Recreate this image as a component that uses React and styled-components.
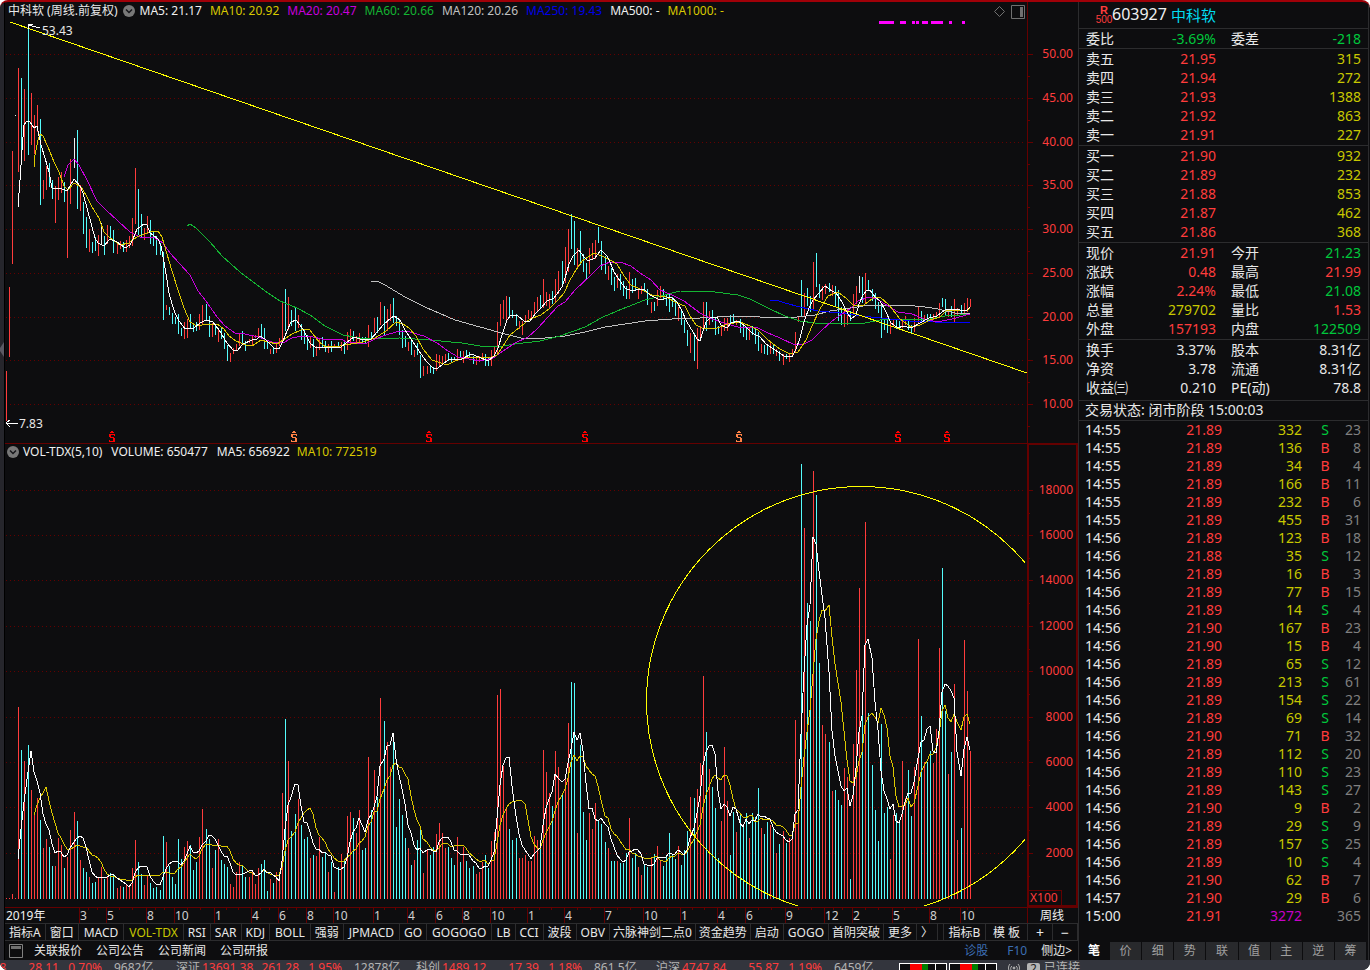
import React from 'react'
import styled, { createGlobalStyle, css } from 'styled-components'

const UP = '#ff3c3c'
const DOWN = '#54fcfc'
const GREEN = '#00c83c'
const YELLOW = '#c8c800'
const LABEL = '#e8e8e8'
const GRID = '#640000'
const FONT = '"Noto Sans", "Noto Sans CJK SC", sans-serif'

// weekly bars: tone (r up, c down, w flat), high row, low row, volume height
const BARS = `
r371,421,1 r287,357,1 r151,264,5 w115,116,1 r68,172,192 c78,150,149 r89,161,138 c25,155,154 r93,145,109 r115,154,86
r105,132,101 c119,205,79 r180,199,51 r166,190,60 c163,187,52 c180,199,33 r186,223,33 r177,200,61 r172,193,54 c182,202,31
r191,258,42 r159,204,69 w138,168,87 c130,209,78 r185,211,39 c202,234,31 c217,248,27 r229,252,22 c242,253,16 c237,251,17
r235,256,21 w223,245,32 c236,255,20 r225,244,22 c226,240,26 c230,253,24 r243,254,11 r241,249,13 c242,252,12 r240,252,14
r236,248,12 r218,246,31 r168,224,59 c189,235,37 c214,237,25 r228,240,14 r216,234,24 c220,244,16 c232,246,11 c236,255,12
c243,255,9 c252,320,63 r305,310,57 c307,315,33 c313,324,22 c317,324,15 c314,334,60 c328,336,40 r322,339,52 r319,338,58
c314,328,54 c323,332,29 c322,331,37 r314,330,62 r305,324,90 c304,320,70 c316,337,60 r323,337,31 c325,335,49 r329,342,60
c328,339,39 c333,349,35 c345,361,32 r353,362,15 r348,354,12 r344,351,27 r334,346,37 c331,343,34 c341,351,22 r339,343,22
r335,345,28 r335,338,15 r328,338,31 c324,338,35 c328,349,39 c341,349,8 r349,354,20 c348,354,16 r343,353,27 r338,346,19
r301,342,106 c289,331,180 r297,330,138 c310,326,68 c308,331,85 r315,328,100 c324,340,74 c330,344,60 c335,350,62 r337,348,41
c339,357,44 r346,356,43 r338,350,62 c337,348,42 c341,352,46 r344,353,27 c341,352,37 r344,348,7 c342,348,32 r342,351,45
c342,354,38 r332,350,83 r329,345,87 c331,341,81 r336,343,66 r333,343,89 c337,344,49 c337,344,51 r325,347,142 c332,338,89
r318,333,129 c317,333,102 r302,325,201 c306,335,178 r309,331,157 r304,321,132 c298,323,160 c316,326,72 c320,335,100 c330,348,84
c336,347,61 r342,351,51 c341,355,34 r350,357,39 c343,355,59 c355,378,71 r366,376,26 r366,374,49 c365,373,44 c367,374,52
r354,371,65 r355,367,76 r356,365,66 r354,363,51 c353,361,52 c357,362,41 c357,360,34 r349,359,62 c351,357,37 r351,363,52
c350,356,38 c352,358,31 c356,364,33 r358,365,25 r356,362,27 r353,361,37 c354,366,44 c358,366,31 r350,366,58 r346,357,67
r322,353,204 r304,326,210 r300,319,133 r296,320,92 c297,318,70 c310,318,59 c314,326,61 r321,329,41 r321,335,41 r315,322,44
r310,319,38 r311,318,38 r302,314,63 r297,311,59 c295,308,59 r279,308,149 r292,306,127 r294,308,106 c291,304,93 r279,303,148
r271,294,132 c261,284,105 r247,283,120 r229,272,176 c214,249,217 c221,265,216 r248,268,66 c231,265,154 c254,272,87 c263,280,59
r248,274,86 r243,260,70 r240,259,96 c227,243,79 c241,270,75 c256,274,57 r266,280,51 c268,285,38 c277,291,38 r274,288,38
c274,290,36 c281,296,36 c286,299,46 r272,299,81 c279,293,41 c278,291,46 r288,299,32 r286,294,24 c283,291,34 c289,305,32
r302,313,42 c302,311,45 r290,306,53 r286,298,38 c289,299,33 c295,306,42 c294,312,66 c297,307,44 c301,316,40 r307,321,53
c311,325,34 c320,333,49 c330,346,68 r333,353,102 c333,361,101 r328,369,110 r326,341,136 r302,330,223 c302,331,167 r311,325,130
c310,322,112 c318,335,91 c326,334,41 r325,336,78 r318,331,152 r318,331,98 c315,325,44 c314,324,87 r320,325,67 c319,333,86
c325,337,74 c327,340,86 r328,340,61 c326,335,86 c327,344,82 c332,351,111 r344,353,71 c345,354,65 c345,355,77 r343,354,74
c345,354,71 r349,356,46 c351,361,55 r354,365,68 c354,359,56 r353,362,61 r349,357,62 r332,353,179 r316,322,89 c280,316,435
r293,317,371 c288,306,296 c296,312,278 r262,309,428 c253,287,404 c284,298,236 r286,300,174 r284,294,165 c283,292,157 r285,296,108
c286,307,109 c290,321,99 c307,325,94 r306,327,131 r308,325,122 c311,321,20 r294,315,155 r286,304,229 w276,293,311 c277,303,198
r273,303,377 c280,291,186 c289,301,134 c293,309,89 c302,313,58 c303,338,175 c320,330,86 c320,333,92 r322,334,40 r320,327,84
c319,329,86 c321,330,78 r320,328,138 r316,325,101 c320,330,129 c325,334,83 r318,332,132 r306,323,260 c311,321,183 r315,321,137
c314,321,137 c314,319,148 r314,320,136 r312,318,170 r303,317,251 c298,307,331 c299,316,188 r309,317,125 c306,317,147 r299,322,215
r308,315,59 c305,315,71 r303,314,259 r298,312,208 r299,307,148
`.trim().split(/\s+/).map((s, i) => {
    const [high, low, volume] = s.slice(1).split(',').map(Number)
    return { x: Math.floor(6.55 + 3.069 * i), tone: s[0], high, low, volume }
})

const BAR_COLOR = { r: UP, c: DOWN, w: '#f0f0f0' }
const VOLUME_BASE = 899

const AVERAGES = [
    { color: '#c0c0c0', points: '371,281 377,281 385,285 405,297 425,307 455,320 480,327 505,334 525,339 545,338 565,336 585,332 605,327 645,321 672,319 700,318 735,316 755,316 760,317 797,317 815,315 830,311 850,308 870,305 905,305 925,307 938,309 955,313 970,314' },
    { color: '#14b432', points: '187,226 190,224 196,228 210,242 222,256 240,272 257,285 268,293 280,301 297,308 310,315 325,326 343,335 365,339 400,338 430,340 462,343 480,346 497,347 515,344 540,341 560,336 585,327 603,317 622,309 645,300 661,296 680,291 715,292 738,295 750,299 770,309 785,316 800,321 815,323 838,323 850,324 865,323 880,320 905,319 925,320 945,316 960,315 970,314' },
    { color: '#0000ff', points: '770,300 776,300 785,303 800,307 818,311 840,313 862,316 890,319 910,321 935,322 970,322' },
    { color: '#c800dc', points: '64,177 68,165 74,159 79,165 87,180 97,201 106,210 118,221 130,232 140,237 155,238 163,243 170,253 180,264 190,275 198,291 206,301 217,317 225,326 235,333 245,334 258,337 272,342 283,343 292,338 302,336 313,337 322,339 342,339 346,342 365,344 375,339 386,335 396,332 406,331 424,336 437,343 448,351 458,357 480,361 493,358 503,351 515,343 528,337 537,329 548,317 558,306 565,302 575,290 590,276 600,266 610,262 620,262 631,266 640,273 651,280 660,290 672,295 684,301 700,313 712,319 727,324 738,327 756,327 768,333 780,338 795,345 804,344 812,340 822,330 832,321 842,314 850,309 858,301 869,297 877,299 888,306 898,312 912,314 924,319 937,322 952,319 970,314' },
    { color: '#dcc800', points: '34,167 35,155 38,140 40,134 43,136 48,147 54,162 59,172 64,186 68,190 74,183 81,187 86,195 92,207 99,218 104,232 110,238 120,245 129,243 137,237 144,234 153,231 158,231 162,237 167,254 172,271 178,290 184,308 190,322 197,326 208,324 217,324 224,329 229,336 236,341 246,345 252,346 261,340 268,342 277,344 283,340 292,334 301,330 309,329 313,334 319,342 326,347 340,346 351,344 363,342 375,338 386,331 396,322 403,324 409,328 416,336 423,349 432,360 447,365 455,361 468,357 490,358 497,355 503,346 510,335 520,327 530,319 541,315 550,308 558,300 564,293 570,280 576,270 582,261 588,257 594,253 602,256 610,260 617,264 624,276 631,285 640,289 652,295 666,297 677,303 685,306 690,316 696,325 704,329 717,328 728,324 740,322 750,326 758,330 768,340 780,349 790,354 798,352 806,340 812,326 820,309 828,296 838,292 846,298 853,305 864,305 873,298 880,297 889,305 900,319 911,327 920,325 930,320 940,317 947,310 957,311 968,310 970,307' },
    { color: '#ffffff', points: '18,207 20,180 22,150 24,125 27,121 30,122 34,128 37,126 41,145 45,158 49,172 52,188 60,188 67,191 74,179 80,186 83,193 88,212 91,223 95,238 98,243 104,246 110,239 117,242 125,248 130,245 133,239 137,229 144,224 147,225 150,233 158,239 161,246 164,262 167,280 169,293 172,304 175,313 179,321 185,329 194,328 200,323 206,320 213,322 219,330 227,343 233,350 237,351 243,344 252,340 257,339 260,336 265,339 274,348 279,349 283,341 287,331 291,322 296,320 303,329 310,343 316,348 326,347 341,347 346,343 354,337 363,340 371,339 378,331 383,325 391,318 394,316 400,320 405,330 413,342 419,351 426,361 434,369 438,368 448,360 462,359 471,354 479,357 488,361 494,356 498,348 503,332 507,320 511,315 518,316 524,321 530,321 536,313 541,308 547,301 554,298 562,287 565,278 569,264 573,256 579,250 584,257 588,261 595,258 601,250 607,256 610,262 614,272 618,278 625,288 632,291 640,289 644,289 650,295 660,300 671,297 677,302 682,311 687,322 693,332 697,339 700,341 702,334 706,322 711,317 717,317 721,325 727,328 731,323 738,321 745,326 752,333 760,337 766,344 775,350 784,356 792,357 796,349 800,338 804,322 809,308 813,300 818,294 825,286 832,291 836,293 842,302 846,310 851,319 856,315 859,304 863,295 867,290 870,290 875,297 880,301 885,310 891,323 898,328 903,326 911,328 920,323 929,318 937,316 945,310 952,309 960,310 966,311 970,307' },
]

const PRICE_TICKS = [['50.00', 54], ['45.00', 98], ['40.00', 142], ['35.00', 185], ['30.00', 229], ['25.00', 273], ['20.00', 317], ['15.00', 360], ['10.00', 404]]
const VOLUME_TICKS = [['18000', 490], ['16000', 535], ['14000', 580], ['12000', 626], ['10000', 671], ['8000', 717], ['6000', 762], ['4000', 807], ['2000', 853]]
const MONTHS = [['3', 80], ['5', 107], ['8', 147], ['10', 175], ['1', 215], ['4', 252], ['6', 279], ['8', 307], ['10', 334], ['1', 374], ['4', 408], ['6', 436], ['8', 463], ['10', 491], ['1', 528], ['4', 565], ['7', 605], ['10', 644], ['1', 681], ['4', 718], ['6', 746], ['9', 786], ['12', 825], ['2', 853], ['5', 893], ['8', 930], ['10', 961]]
const DIVIDENDS = [[112], [294, true], [429], [585], [739, true], [898], [947]]
const SIGNALS = [[879, 15], [900, 6], [912, 3], [916, 3], [922, 6], [931, 12], [949, 3], [962, 3]]

const PRICE_LEGEND = [
    ['MA5: 21.17', '#f0f0f0'], ['MA10: 20.92', '#d8c800'], ['MA20: 20.47', '#c800dc'], ['MA60: 20.66', '#14b432'],
    ['MA120: 20.26', '#c0c0c0'], ['MA250: 19.43', '#0000e6'], ['MA500: -', '#f0f0f0'], ['MA1000: -', '#d8c800'],
]

const INDICATORS = ['指标A', '窗口', 'MACD', 'VOL-TDX', 'RSI', 'SAR', 'KDJ', 'BOLL', '强弱', 'JPMACD', 'GO', 'GOGOGO', 'LB', 'CCI', '波段', 'OBV', '六脉神剑二点0', '资金趋势', '启动', 'GOGO', '首阴突破', '更多', '〉']

const QUOTES = [
    [['委比', '-3.69%', GREEN, '委差', '-218', GREEN]],
    [
        ['卖五', '21.95', UP, '', '315', YELLOW], ['卖四', '21.94', UP, '', '272', YELLOW], ['卖三', '21.93', UP, '', '1388', YELLOW],
        ['卖二', '21.92', UP, '', '863', YELLOW], ['卖一', '21.91', UP, '', '227', YELLOW],
    ],
    [
        ['买一', '21.90', UP, '', '932', YELLOW], ['买二', '21.89', UP, '', '232', YELLOW], ['买三', '21.88', UP, '', '853', YELLOW],
        ['买四', '21.87', UP, '', '462', YELLOW], ['买五', '21.86', UP, '', '368', YELLOW],
    ],
    [
        ['现价', '21.91', UP, '今开', '21.23', GREEN], ['涨跌', '0.48', UP, '最高', '21.99', UP], ['涨幅', '2.24%', UP, '最低', '21.08', GREEN],
        ['总量', '279702', YELLOW, '量比', '1.53', UP], ['外盘', '157193', UP, '内盘', '122509', GREEN],
    ],
    [
        ['换手', '3.37%', LABEL, '股本', '8.31亿', LABEL], ['净资', '3.78', LABEL, '流通', '8.31亿', LABEL],
        ['收益㈢', '0.210', LABEL, 'PE(动)', '78.8', LABEL],
    ],
]

const TRADES = `
14:55 21.89 332 S 23|14:55 21.89 136 B 8|14:55 21.89 34 B 4|14:55 21.89 166 B 11|14:55 21.89 232 B 6|14:55 21.89 455 B 31
14:56 21.89 123 B 18|14:56 21.88 35 S 12|14:56 21.89 16 B 3|14:56 21.89 77 B 15|14:56 21.89 14 S 4|14:56 21.90 167 B 23
14:56 21.90 15 B 4|14:56 21.89 65 S 12|14:56 21.89 213 S 61|14:56 21.89 154 S 22|14:56 21.89 69 S 14|14:56 21.90 71 B 32
14:56 21.89 112 S 20|14:56 21.89 110 S 23|14:56 21.89 143 S 27|14:56 21.90 9 B 2|14:56 21.89 29 S 9|14:56 21.89 157 S 25
14:56 21.89 10 S 4|14:56 21.90 62 B 7|14:57 21.90 29 B 6|15:00 21.91 3272 - 365
`.trim().split(/[|\n]/).map(line => line.split(' '))

const MARKETS = [
    ['上证', '3391.88', '28.11', '0.70%', '9682亿'],
    ['深证', '13691.38', '261.28', '1.95%', '12878亿'],
    ['科创', '1489.12', '17.39', '1.18%', '861.5亿'],
    ['沪深', '4747.84', '55.87', '1.19%', '6459亿'],
]

const movingAverage = (size) => BARS.slice(size - 1).map((bar, i) => {
    const sum = BARS.slice(i, i + size).reduce((total, b) => total + b.volume, 0)
    return `${bar.x},${Math.round(VOLUME_BASE - sum / size)}`
}).join(' ')

const tabPadding = (name) => {
    if (/^[A-Z-]{4,}$/.test(name) && name !== 'GOGO') return 5
    return /[\u4e00-\u9fff]{4,}/.test(name) ? 3 : 4
}

function Scale({ ticks, step }) {
    return (
        <g>
            {ticks.map(([label, y]) => (
                <g key={label}>
                    <line x1="6" x2="1026" y1={y + 0.5} y2={y + 0.5} stroke={GRID} strokeDasharray="1 3" />
                    <line x1="1028" x2="1033" y1={y + 0.5} y2={y + 0.5} stroke={GRID} />
                    <line x1="1028" x2="1030" y1={y + step + 0.5} y2={y + step + 0.5} stroke={GRID} />
                    <text x="1073" y={y + 4} fill={UP} textAnchor="end">{label}</text>
                </g>
            ))}
        </g>
    )
}

function PriceChart() {
    return (
        <Chart viewBox="5 21 1073 422" role="img" aria-label="周线价格">
            <Scale ticks={PRICE_TICKS} step={22} />
            <line x1="1027.5" x2="1027.5" y1="21" y2="443" stroke={GRID} />
            {SIGNALS.map(([x, width]) => <rect key={x} x={x} y="21" width={width} height="3" fill="#ff00ff" />)}
            {BARS.map(bar => <rect key={bar.x} x={bar.x} y={bar.high} width="1" height={bar.low - bar.high} fill={BAR_COLOR[bar.tone]} />)}
            {AVERAGES.map(line => <Curve key={line.color} points={line.points} stroke={line.color} />)}
            <Curve points="10,22 1027,373" stroke="#ffff00" />
            <Curve points="33,24 28,24 28,29" stroke="#fff" />
            <Curve points="28,25 40,28" stroke="#fff" />
            <text x="42" y="35" fill={LABEL}>53.43</text>
            <Curve points="10,420 6,423 10,427" stroke="#fff" />
            <Curve points="6,423 18,423" stroke="#fff" />
            <text x="19" y="428" fill={LABEL}>7.83</text>
            {DIVIDENDS.map(([x, soft]) => (
                <Dividend key={x} $soft={soft}>
                    <path d={`M${x - 1} 431h2v1h1v1h-4v-1h1zM${x - 3} 434h6v2h-1v-1h-3v2h3v1h1v4h-6v-2h1v1h3v-3h-3v-1h-1z`} />
                </Dividend>
            ))}
        </Chart>
    )
}

function VolumeChart() {
    return (
        <Chart viewBox="5 460 1073 447" role="img" aria-label="成交量">
            <clipPath id="plot"><rect x="5" y="460" width="1020" height="446" /></clipPath>
            <Scale ticks={VOLUME_TICKS} step={23} />
            <path d="M1028 460V906H1077V460" fill="none" stroke={GRID} strokeWidth="2" />
            <path d="M1029 890.5H1061.5V906" fill="none" stroke={GRID} />
            <text x="1030" y="902" fill={UP}>X100</text>
            {BARS.map(bar => <rect key={bar.x} x={bar.x} y={VOLUME_BASE - bar.volume} width="1" height={bar.volume} fill={BAR_COLOR[bar.tone === 'w' ? 'r' : bar.tone]} />)}
            <Curve points={movingAverage(10)} stroke="#dcc800" />
            <Curve points={movingAverage(5)} stroke="#ffffff" />
            <circle cx="861" cy="701" r="214.5" fill="none" stroke="#ffff00" clipPath="url(#plot)" />
        </Chart>
    )
}

function TimeAxis() {
    return (
        <Chart viewBox="5 907 1073 16" role="img" aria-label="时间轴">
            <path d="M5 907.5H1078M1027.5 907V923" stroke={GRID} fill="none" />
            {MONTHS.map(([label, x], i) => {
                const next = i < MONTHS.length - 1 ? MONTHS[i + 1][1] : x + 20
                const third = Math.round((next - x) / 3)
                return (
                    <g key={x}>
                        <path d={`M${x - 0.5} 907V923M${x + third - 0.5} 907V910M${x + third * 2 - 0.5} 907V910`} stroke={GRID} />
                        <text x={x} y="920" fill="#d0d0d0">{label}</text>
                    </g>
                )
            })}
            <text x="6" y="920" fill="#f0f0f0">2019年</text>
            <text x="1040" y="920" fill="#f0f0f0">周线</text>
        </Chart>
    )
}

function Chevron() {
    return (
        <ToggleButton aria-label="展开">
            <svg width="12" height="12" viewBox="0 0 12 12">
                <circle cx="6" cy="6" r="6" fill="#787878" />
                <path d="M3 4.5L6 7.5L9 4.5" fill="none" stroke="#16161a" strokeWidth="1.5" />
            </svg>
        </ToggleButton>
    )
}

function QuotePanel() {
    return (
        <Side>
            <Title>
                <Badge><b>R</b><span>500</span></Badge>
                <Code>603927</Code>
                <Name>中科软</Name>
            </Title>
            <QuoteTable>
                <colgroup><col width="57" /><col width="80" /><col width="62" /><col /></colgroup>
                {QUOTES.map(group => (
                    <tbody key={group[0][0]}>
                        {group.map(([label, value, tone, label2, value2, tone2]) => (
                            <tr key={label}>
                                <th scope="row">{label}</th>
                                <Value $tone={tone}>{value}</Value>
                                <th>{label2}</th>
                                <Value $tone={tone2}>{value2}</Value>
                            </tr>
                        ))}
                    </tbody>
                ))}
            </QuoteTable>
            <Status>交易状态: 闭市阶段 15:00:03</Status>
            <TradeTable>
                <colgroup><col width="57" /><col width="86" /><col width="80" /><col width="32" /><col /></colgroup>
                <tbody>
                    {TRADES.map(([time, price, lots, side, count], i) => (
                        <tr key={i}>
                            <th scope="row">{time}</th>
                            <Value $tone={UP}>{price}</Value>
                            <Value $tone={side === '-' ? '#c800c8' : YELLOW}>{lots}</Value>
                            <SideMark $tone={side === 'S' ? GREEN : UP}>{side === '-' ? '' : side}</SideMark>
                            <Value $tone="#808080">{count}</Value>
                        </tr>
                    ))}
                </tbody>
            </TradeTable>
            <SideTabs>
                {['笔', '价', '细', '势', '联', '值', '主', '逆', '筹'].map((tab, i) => (
                    <SideTab key={tab} $active={i === 0}>{tab}</SideTab>
                ))}
            </SideTabs>
        </Side>
    )
}

function Ticker() {
    return (
        <TickerBar>
            {MARKETS.map(([name, value, change, percent, amount]) => (
                <Market key={name}>
                    <span>{name}</span>
                    <Rise>{value}</Rise>
                    <Rise $end>{change}</Rise>
                    <Rise $end>{percent}</Rise>
                    <Amount>{amount}</Amount>
                </Market>
            ))}
            <Meter><i /><i /><i /><i /><i /></Meter>
            <Meter><i /><i /><i /><i /><i /></Meter>
            <Connection>
                <svg width="14" height="10" viewBox="0 0 14 10" fill="none" stroke="#b0b0b0">
                    <path d="M3 1a6 6 0 0 0 0 8M11 1a6 6 0 0 1 0 8M5 3a3 3 0 0 0 0 5M9 3a3 3 0 0 1 0 5" />
                    <circle cx="7" cy="5" r="1" fill="#b0b0b0" />
                </svg>
                <Count>2</Count>
                <span>已连接</span>
            </Connection>
        </TickerBar>
    )
}

function App() {
    return (
        <Window>
            <GlobalStyle />
            <Main>
                <Handle aria-label="收起">
                    <svg width="4" height="15" viewBox="0 0 4 15"><path d="M4 0V15L0 9V6Z" fill="#5a5a64" /></svg>
                </Handle>
                <Charts>
                    <Legend>
                        <Items>
                            <span>中科软 (周线.前复权)</span>
                            <Chevron />
                            {PRICE_LEGEND.map(([text, tone]) => <Item key={text} $tone={tone}>{text}</Item>)}
                        </Items>
                        <Tools>
                            <ToggleButton aria-label="标记">
                                <svg width="11" height="11" viewBox="0 0 11 11"><path d="M5.5 0.5L10.5 5.5L5.5 10.5L0.5 5.5Z" fill="none" stroke="#707070" /></svg>
                            </ToggleButton>
                            <ToggleButton aria-label="侧栏">
                                <svg width="14" height="14" viewBox="0 0 14 14"><path d="M0.5 0.5H13.5V13.5H0.5Z" fill="none" stroke="#707070" /><rect x="9" y="2" width="3" height="10" fill="#707070" /></svg>
                            </ToggleButton>
                        </Tools>
                        <AxisHead />
                    </Legend>
                    <PriceChart />
                    <VolumeLegend>
                        <Items>
                            <Chevron />
                            <Item>VOL-TDX(5,10)</Item>
                            <Item>VOLUME: 650477</Item>
                            <Item>MA5: 656922</Item>
                            <Item $tone="#d8c800">MA10: 772519</Item>
                        </Items>
                        <AxisHead $boxed />
                    </VolumeLegend>
                    <VolumeChart />
                    <TimeAxis />
                    <Tabs>
                        {INDICATORS.map(tab => <Tab key={tab} $pad={tabPadding(tab)} $active={tab === 'VOL-TDX'}>{tab}</Tab>)}
                        <Spacer />
                        <Tab $wide>指标B</Tab>
                        <Tab $wide>模 板</Tab>
                        <Tab $square>+</Tab>
                        <Tab $square>−</Tab>
                    </Tabs>
                    <Links>
                        <svg width="14" height="14" viewBox="0 0 14 14"><path d="M0.5 0.5H13.5V13.5H0.5Z" fill="none" stroke="#808080" /><rect x="2" y="2" width="10" height="3" fill="#707070" /></svg>
                        <a href="#quote">关联报价</a>
                        <a href="#notice">公司公告</a>
                        <a href="#news">公司新闻</a>
                        <a href="#report">公司研报</a>
                        <Spacer />
                        <BlueLink href="#diagnose">诊股</BlueLink>
                        <BlueLink href="#f10">F10</BlueLink>
                        <a href="#side">侧边&gt;</a>
                    </Links>
                </Charts>
                <QuotePanel />
            </Main>
            <Ticker />
        </Window>
    )
}

const GlobalStyle = createGlobalStyle`
    *{
        box-sizing: border-box;
    }
    body{
        margin: 0;
        background: #fff;
        font-family: ${FONT};
        font-size: 12px;
        color: ${LABEL};
    }
    button{
        font: inherit;
        color: inherit;
        border: 0;
        padding: 0;
        background: none;
    }
    a{
        color: inherit;
        text-decoration: none;
    }
`;

const Window = styled.div`
    background: #0d0d0f;
    border-top: 2px solid #a00008;
    border-radius: 8px;
    overflow: hidden;
`;

const Main = styled.main`
    display: grid;
    grid-template-columns: 5px minmax(0, 1fr) 292px;
`;

const Handle = styled.button`
    display: flex;
    align-items: flex-start;
    background: #26262c;
    border-right: 1px solid #000;
    svg{
        margin-top: 340px;
    }
`;

const Charts = styled.section`
    display: flex;
    flex-direction: column;
    min-width: 0;
`;

const Chart = styled.svg`
    display: block;
    width: 100%;
    height: auto;
    font-family: ${FONT};
    font-size: 12px;
    shape-rendering: crispEdges;
`;

const Curve = styled.polyline`
    fill: none;
    stroke-width: 1px;
`;

const Dividend = styled.g`
    fill: ${p => p.$soft ? '#ff8246' : '#ff0000'};
`;

const Legend = styled.header`
    display: flex;
    height: 19px;
    line-height: 16px;
    white-space: nowrap;
`;

const VolumeLegend = styled(Legend)`
    height: 17px;
    border-top: 1px solid ${GRID};
`;

const Items = styled.div`
    display: flex;
    flex: 1;
    align-items: center;
    gap: 5px;
    min-width: 0;
    padding: 0 0 2px 3px;
    ${VolumeLegend} &{
        padding: 0 0 0 2px;
        gap: 4px;
    }
`;

const Item = styled.span`
    color: ${p => p.$tone || '#f0f0f0'};
    & + &{
        margin-left: 3px;
    }
    ${VolumeLegend} & + &{
        margin-left: 5px;
    }
`;

const ToggleButton = styled.button`
    display: flex;
`;

const Tools = styled.div`
    display: flex;
    align-items: center;
    gap: 6px;
    padding-right: 2px;
`;

const AxisHead = styled.div`
    width: 51px;
    border-left: 1px solid ${GRID};
    ${p => p.$boxed && css`
        border: 2px solid ${GRID};
        border-top-width: 1px;
        border-bottom: 0;
    `}
`;

const Tabs = styled.nav`
    display: flex;
    height: 18px;
    border: 1px solid #2c2c2e;
    border-width: 1px 0;
`;

const Tab = styled.button`
    flex: none;
    padding: 0 ${p => p.$pad || 4}px;
    line-height: 17px;
    white-space: nowrap;
    border-right: 1px solid #2c2c2e;
    color: ${p => p.$active ? YELLOW : LABEL};
    ${p => p.$wide && css`
        width: 42px;
        text-align: center;
    `}
    ${p => p.$square && css`
        width: 25px;
        font-size: 14px;
    `}
`;

const Spacer = styled.span`
    flex: 1;
    border-right: 1px solid #2c2c2e;
`;

const Links = styled.nav`
    display: flex;
    align-items: center;
    gap: 14px;
    height: 19px;
    padding: 0 6px 0 4px;
    line-height: 18px;
    svg{
        margin-right: -3px;
    }
    ${Spacer}{
        border: 0;
    }
`;

const BlueLink = styled.a`
    &&{
        color: #3c6eb4;
    }
    & + &{
        margin-left: 5px;
    }
`;

const Side = styled.aside`
    display: flex;
    flex-direction: column;
    margin-right: 1px;
    border: 1px solid #2c2c2e;
    border-width: 0 1px;
    font-size: 14px;
`;

const Title = styled.h1`
    display: flex;
    align-items: center;
    height: 26px;
    margin: 0;
    padding: 0 0 2px 17px;
    font-weight: 400;
`;

const Badge = styled.span`
    display: flex;
    flex-direction: column;
    align-items: center;
    width: 16px;
    padding-top: 2px;
    font: 10px/9px "Liberation Sans", sans-serif;
    color: ${UP};
    b{
        font-size: 11px;
    }
`;

const Code = styled.span`
    font-size: 16px;
    color: #f0f0f0;
`;

const Name = styled.span`
    margin-left: 4px;
    font-size: 15px;
    color: #00dcf0;
`;

const Value = styled.td`
    color: ${p => p.$tone};
    text-align: right;
`;

const SideMark = styled(Value)`
    text-align: center;
`;

const DataTable = styled.table`
    width: 100%;
    table-layout: fixed;
    border-spacing: 0;
    th, td{
        padding: 0;
        white-space: nowrap;
    }
    th{
        font-weight: 400;
        text-align: left;
        padding-left: 7px;
    }
    td:last-child{
        padding-right: 7px;
    }
`;

const QuoteTable = styled(DataTable)`
    line-height: 19px;
    td + th{
        padding-left: 15px;
    }
    tbody tr:first-child > *{
        border-top: 1px solid #2c2c2e;
    }
    tbody:not(:first-of-type) tr:last-child > *{
        padding-bottom: 1px;
    }
    tbody:last-child tr:last-child > *{
        padding-bottom: 3px;
    }
`;

const Status = styled.p`
    margin: 0;
    padding-left: 6px;
    height: 21px;
    line-height: 18px;
    border: 1px solid #2c2c2e;
    border-width: 1px 0;
`;

const TradeTable = styled(DataTable)`
    line-height: 18px;
    th{
        padding-left: 6px;
    }
    ${SideMark}{
        padding-left: 14px;
    }
`;

const SideTabs = styled.nav`
    display: flex;
    gap: 1px;
    height: 18px;
    margin-top: auto;
    padding-right: 2px;
    font-size: 12px;
`;

const SideTab = styled.button`
    flex: 1;
    line-height: 16px;
    background: ${p => p.$active ? 'none' : '#28292c'};
    color: ${p => p.$active ? '#fff' : '#a0a0a0'};
    font-weight: ${p => p.$active ? 700 : 400};
    &:first-child{
        flex: none;
        width: 30px;
    }
`;

const TickerBar = styled.footer`
    display: flex;
    height: 10px;
    overflow: hidden;
    line-height: 15px;
    white-space: nowrap;
    background: #33353d;
    color: #b4b4b4;
`;

const Market = styled.div`
    display: grid;
    flex: none;
    grid-template-columns: 26px 52px 45px 43px 62px;
    width: 240px;
    &:first-child{
        margin-left: -64px;
    }
`;

const Rise = styled.span`
    color: ${UP};
    text-align: ${p => p.$end ? 'right' : 'left'};
`;

const Amount = styled.span`
    padding-left: 12px;
`;

const Meter = styled.div`
    display: flex;
    flex: none;
    width: 48px;
    height: 12px;
    margin: 3px 2px 0 0;
    border: 1px solid #fff;
    ${Market} + &{
        margin-left: 3px;
    }
    i{
        flex: 10;
        background: #0d0d0f;
    }
    i:nth-child(2){
        flex: 12;
        background: #ff0000;
    }
    i:nth-child(3){
        flex: 6;
        background: #008000;
    }
    i:nth-child(4){
        flex: 7;
        border-right: 1px solid #fff;
    }
`;

const Connection = styled.div`
    display: flex;
    align-items: flex-start;
    gap: 6px;
    padding-left: 8px;
    svg{
        margin-top: 3px;
    }
`;

const Count = styled.span`
    width: 13px;
    margin: 3px -2px 0 0;
    border-radius: 2px;
    text-align: center;
    line-height: 12px;
    background: #b4b4b4;
    color: #222;
`;

export default App
